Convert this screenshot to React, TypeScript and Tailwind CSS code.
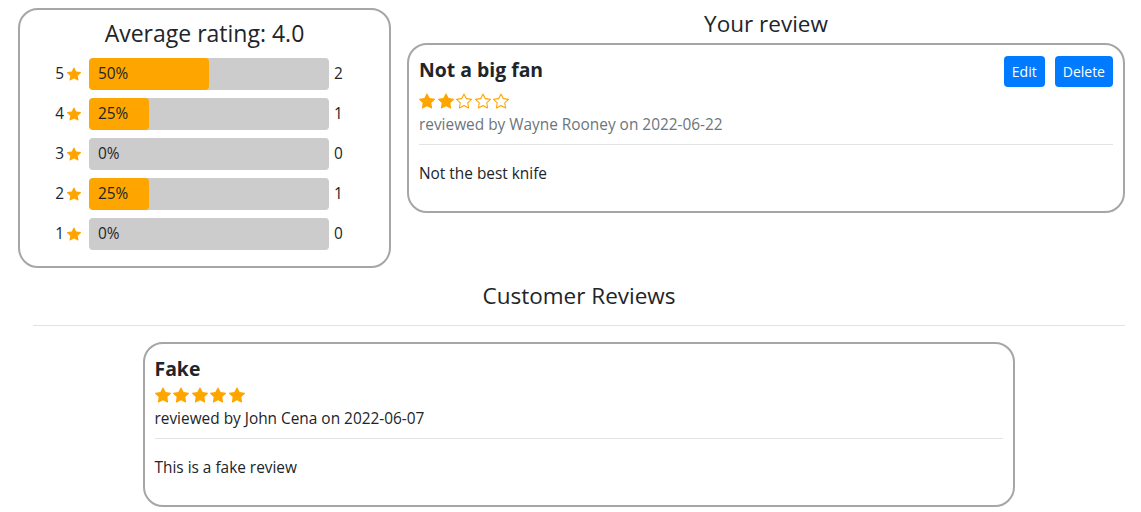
import { BsStar, BsStarFill } from "react-icons/bs";

const font = { fontFamily: '"Open Sans", "Noto Sans", sans-serif' };

const breakdown = [
  { stars: 5, pct: 50, count: 2 },
  { stars: 4, pct: 25, count: 1 },
  { stars: 3, pct: 0, count: 0 },
  { stars: 2, pct: 25, count: 1 },
  { stars: 1, pct: 0, count: 0 },
];

function Stars({ value }: { value: number }) {
  return (
    <div className="flex items-center gap-[2.5px] text-[#ffa500]">
      {[1, 2, 3, 4, 5].map((i) =>
        i <= value ? <BsStarFill key={i} size={16} /> : <BsStar key={i} size={16} />
      )}
    </div>
  );
}

function ReviewCard({
  title,
  rating,
  author,
  date,
  body,
  muted,
  actions,
}: {
  title: string;
  rating: number;
  author: string;
  date: string;
  body: string;
  muted?: boolean;
  actions?: boolean;
}) {
  return (
    <div className="rounded-[20px] border-2 border-[#a6a6a6] px-[10px] pt-[10px] pb-[25px]">
      <div className="flex items-start justify-between">
        <h3 className="text-[19.4px] font-bold leading-[30px] text-[#212529]">{title}</h3>
        {actions && (
          <div className="mt-[1px] mb-[3px] flex gap-[10px]">
            <button className="h-[31px] rounded-[4px] bg-[#007bff] px-[8px] text-[14px] text-white">
              Edit
            </button>
            <button className="h-[31px] rounded-[4px] bg-[#007bff] px-[8px] text-[14px] text-white">
              Delete
            </button>
          </div>
        )}
      </div>
      <div className="mt-[3px]">
        <Stars value={rating} />
      </div>
      <p
        className={`mt-[4px] text-[15.4px] leading-[24px] ${
          muted ? "text-[#6c757d]" : "text-[#212529]"
        }`}
      >
        reviewed by {author} on {date}
      </p>
      <hr className="mt-[7px] border-t border-[#e3e3e3]" />
      <p className="mt-[17px] text-[15.4px] leading-[24px] text-[#212529]">{body}</p>
    </div>
  );
}

export default function App() {
  return (
    <div className="min-h-[512px] bg-white text-[#212529]" style={font}>
      <div className="flex items-start pt-[8px] pl-[18px] pr-[16px]">
        {/* Rating summary */}
        <div className="w-[373px] rounded-[20px] border-2 border-[#a6a6a6] pt-[8px] pb-[16px]">
          <h2 className="text-center text-[23px] leading-[30px]">Average rating: 4.0</h2>
          <div className="mt-[10px] flex flex-col gap-[8px]">
            {breakdown.map((r) => (
              <div key={r.stars} className="flex items-center">
                <span className="w-[44px] text-right text-[15.4px]">{r.stars}</span>
                <BsStarFill className="ml-[3px] text-[#ffa500]" size={14} />
                <div className="relative ml-[8px] h-[32px] w-[240px] overflow-hidden rounded-[4px] bg-[#cccccc]">
                  <div className="h-full rounded-[4px] bg-[#ffa500]" style={{ width: `${r.pct}%` }} />
                  <span className="absolute left-[9px] top-0 text-[15.4px] leading-[32px]">{r.pct}%</span>
                </div>
                <span className="ml-[5px] text-[15.4px]">{r.count}</span>
              </div>
            ))}
          </div>
        </div>

        {/* Your review */}
        <div className="ml-[16px] flex-1">
          <h2 className="pt-[1px] text-center text-[22.5px] leading-[30px]">Your review</h2>
          <div className="mt-[4px]">
            <ReviewCard
              title="Not a big fan"
              rating={2}
              author="Wayne Rooney"
              date="2022-06-22"
              body="Not the best knife"
              muted
              actions
            />
          </div>
        </div>
      </div>

      <div className="mt-[13px] pl-[33px] pr-[16px]">
        <h2 className="text-center text-[22.5px] leading-[30px]">Customer Reviews</h2>
        <hr className="mt-[14px] border-t border-[#e3e3e3]" />
      </div>

      <div className="mt-[16px] flex justify-center pl-[16px]">
        <div className="w-[872px]">
          <ReviewCard
            title="Fake"
            rating={5}
            author="John Cena"
            date="2022-06-07"
            body="This is a fake review"
          />
        </div>
      </div>
    </div>
  );
}
